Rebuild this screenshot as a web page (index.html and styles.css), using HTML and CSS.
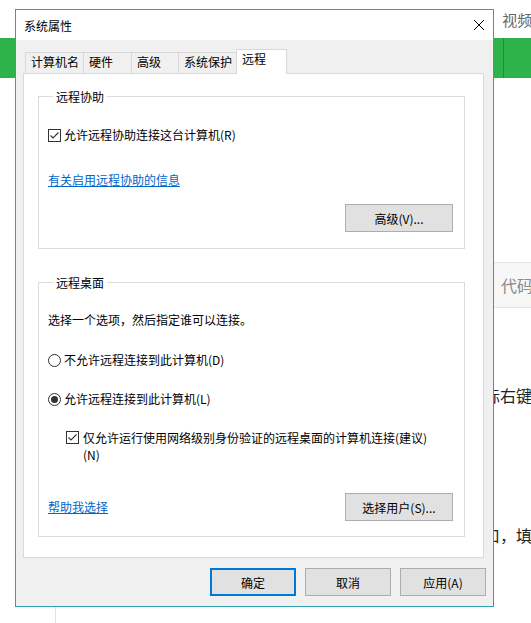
FILE: index.html
```html
<!DOCTYPE html>
<html lang="zh-CN">
<head>
    <meta charset="UTF-8">
    <meta name="viewport" content="width=device-width, initial-scale=1.0">
    <title>系统属性</title>
    <link rel="stylesheet" href="styles.css">
</head>
<body>
    <!-- page behind the window -->
    <div class="site">
        <div class="site-top">
            <a>首页</a><a>资讯</a><a>软件</a><a>教程</a><a>下载</a>
            <a>网页</a><a>编程</a><a>数据</a><a>脚本</a><a>视频</a>
        </div>
        <div class="site-nav">
            <span class="nav-item"></span>
            <span class="nav-item"></span>
            <span class="nav-item"></span>
            <span class="nav-item"></span>
            <span class="nav-item"></span>
        </div>
        <div class="site-main">
            <div class="side"></div>
            <div class="article">
                <p>很多时候我们需要从另一台电脑远程操作</p>
                <p>本机，这时就要先在系统里开启远程桌面。</p>
                <p>下面介绍具体的设置方法。</p>
                <p>一、打开系统属性</p>
                <p>可以在运行框中输入下面的命令：</p>
                <p>&nbsp;</p>
                <div class="code-head">
                    <span class="code-name">运行命令</span>
                    <span class="code-tab">代码</span>
                </div>
                <div class="code-body">
                    <div>Win + R</div>
                    <div>sysdm.cpl</div>
                </div>
                <p>打开控制面板后找到系统选项，或者在此电脑图标上单击鼠标右键，选择属性。</p>
                <p>二、切换到远程选项卡</p>
                <p>在远程桌面一栏中选择允许连接，</p>
                <p>再勾选下方的网络级别身份验证。</p>
                <p>三、添加远程用户</p>
                <p>在弹出的系统属性对话框中切换到远程选项卡，打开远程窗口，填写允许连接的用户名称。</p>
            </div>
        </div>
    </div>

    <!-- System Properties window -->
    <div class="dialog">
        <div class="dialog-title">
            <span>系统属性</span>
            <span class="close">
                <svg width="10" height="10" viewBox="0 0 10 10"><path d="M0 0L10 10M10 0L0 10" stroke="#000" stroke-width="1"/></svg>
            </span>
        </div>
        <div class="dialog-body">
            <div class="tabs">
                <div class="tab tab-name">计算机名</div>
                <div class="tab tab-hw">硬件</div>
                <div class="tab tab-adv">高级</div>
                <div class="tab tab-name">系统保护</div>
                <div class="tab tab-remote active">远程</div>
            </div>
            <div class="panel">
                <div class="group">
                    <div class="group-title">远程协助</div>
                    <div class="row first">
                        <svg class="box" width="13" height="13" viewBox="0 0 13 13"><rect x="0.5" y="0.5" width="12" height="12" fill="#fff" stroke="#333"/><path d="M2.5 6.5L5 9L10.5 3.5" fill="none" stroke="#333" stroke-width="1.1"/></svg>
                        <span>允许远程协助连接这台计算机(R)</span>
                    </div>
                    <a class="link link-info">有关启用远程协助的信息</a>
                    <div class="group-foot foot-end">
                        <button class="btn btn-wide">高级(V)...</button>
                    </div>
                </div>

                <div class="group group-desktop">
                    <div class="group-title">远程桌面</div>
                    <div class="desc">选择一个选项，然后指定谁可以连接。</div>
                    <div class="row radio-off">
                        <svg class="box" width="13" height="13" viewBox="0 0 13 13"><circle cx="6.5" cy="6.5" r="6" fill="#fff" stroke="#333"/></svg>
                        <span>不允许远程连接到此计算机(D)</span>
                    </div>
                    <div class="row radio-on">
                        <svg class="box" width="13" height="13" viewBox="0 0 13 13"><circle cx="6.5" cy="6.5" r="6" fill="#fff" stroke="#333"/><circle cx="6.5" cy="6.5" r="3.5" fill="#333"/></svg>
                        <span>允许远程连接到此计算机(L)</span>
                    </div>
                    <div class="row sub">
                        <svg class="box" width="13" height="13" viewBox="0 0 13 13"><rect x="0.5" y="0.5" width="12" height="12" fill="#fff" stroke="#333"/><path d="M2.5 6.5L5 9L10.5 3.5" fill="none" stroke="#333" stroke-width="1.1"/></svg>
                        <span>仅允许运行使用网络级别身份验证的远程桌面的计算机连接(建议)<br>(N)</span>
                    </div>
                    <div class="group-foot foot-split">
                        <a class="link">帮助我选择</a>
                        <button class="btn btn-wide">选择用户(S)...</button>
                    </div>
                </div>
            </div>
            <div class="dialog-footer">
                <button class="btn btn-footer btn-default">确定</button>
                <button class="btn btn-footer">取消</button>
                <button class="btn btn-footer">应用(A)</button>
            </div>
        </div>
    </div>
</body>
</html>
```

FILE: styles.css
```css
html, body {
    margin: 0;
    height: 100%;
    overflow: hidden;
}
body {
    position: relative;
    background: #fff;
    color: #333;
    font-family: "Noto Sans CJK SC", "Microsoft YaHei", sans-serif;
}

/* site behind the window */
.site-top {
    height: 38px;
    display: flex;
    align-items: center;
    gap: 22px;
    padding-left: 34px;
    font-size: 15px;
    color: #666;
    white-space: nowrap;
}
.site-nav {
    height: 40px;
    display: flex;
    padding-left: 4px;
    background: #2db34a;
}
.nav-item {
    width: 99px;
    border-right: 1px solid #1b8f36;
}
.site-main {
    display: flex;
    height: 545px;
}
.side {
    width: 55px;
    flex: none;
    border-right: 1px solid #e2e2e2;
}
.article {
    flex: 1;
    padding: 16px 0 0 12px;
    font-size: 16px;
    color: #222;
    white-space: nowrap;
}
.article p {
    margin: 0;
    line-height: 28px;
}
.code-head {
    display: flex;
    align-items: center;
    height: 44px;
    border-top: 1px solid #e4e4e4;
    border-bottom: 1px solid #e4e4e4;
    background: #f7f7f7;
}
.code-name {
    width: 433px;
    flex: none;
    font-size: 14px;
    color: #888;
}
.code-tab {
    color: #8a8a8a;
}
.code-body {
    padding: 10px 12px 11px;
    font-family: "Liberation Mono", monospace;
    font-size: 14px;
    line-height: 26px;
}

/* the window */
.dialog {
    position: absolute;
    left: 15px;
    top: 9px;
    width: 479px;
    height: 598px;
    box-sizing: border-box;
    display: flex;
    flex-direction: column;
    border: 1px solid #2ba2ad;
    background: #f0f0f0;
    font-size: 12px;
    color: #000;
}
.dialog-title {
    height: 30px;
    display: flex;
    align-items: center;
    justify-content: space-between;
    padding-left: 8px;
    background: #fff;
}
.close {
    width: 28px;
    height: 30px;
    display: flex;
    align-items: center;
    justify-content: center;
}
.dialog-body {
    flex: 1;
    display: flex;
    flex-direction: column;
    padding: 9px 9px 10px 7px;
}

.tabs {
    display: flex;
    align-items: flex-end;
    margin-left: 2px;
}
.tab {
    height: 21px;
    box-sizing: border-box;
    margin-right: -1px;
    padding-left: 5px;
    border: 1px solid #d9d9d9;
    border-bottom: none;
    line-height: 18px;
    background: #f0f0f0;
}
.tab-name { width: 59px; }
.tab-hw { width: 49px; }
.tab-adv { width: 48px; }
.tab-remote { width: 51px; }
.tab.active {
    position: relative;
    z-index: 1;
    height: 25px;
    margin-bottom: -1px;
    background: #fff;
}

.panel {
    height: 485px;
    box-sizing: border-box;
    padding: 0 18px 0 14px;
    border: 1px solid #d9d9d9;
    background: #fff;
}
.group {
    margin-top: 22px;
    padding: 0 11px 16px 9px;
    border: 1px solid #dcdcdc;
}
.group-desktop {
    margin-top: 33px;
    padding-bottom: 15px;
}
.group-title {
    width: fit-content;
    margin: -8px 0 0 5px;
    padding: 0 3px;
    line-height: 16px;
    background: #fff;
}
.row {
    display: flex;
    align-items: center;
    gap: 3px;
    line-height: 16px;
}
.box {
    flex: none;
}
.row.first { margin-top: 22px; }
.desc {
    margin-top: 21px;
    line-height: 16px;
}
.radio-off { margin-top: 24px; }
.radio-on { margin-top: 23px; }
.row.sub {
    align-items: flex-start;
    margin: 22px 0 0 18px;
    gap: 4px;
    line-height: 17px;
}
.row.sub .box {
    margin-top: 2px;
}
.link {
    display: block;
    width: fit-content;
    line-height: 16px;
    color: #0066cc;
    text-decoration: underline;
}
.link-info { margin-top: 29px; }
.group-foot {
    display: flex;
    align-items: center;
}
.foot-end {
    justify-content: flex-end;
    margin-top: 16px;
}
.foot-split {
    justify-content: space-between;
    margin-top: 30px;
}

.btn {
    height: 28px;
    box-sizing: border-box;
    padding: 0;
    border: 1px solid #adadad;
    background: #e1e1e1;
    color: #000;
    font: inherit;
}
.btn-wide { width: 108px; }
.btn-footer { width: 86px; }
.btn-default {
    border: 2px solid #0078d7;
}
.dialog-footer {
    display: flex;
    justify-content: flex-end;
    gap: 9px;
    margin: 10px -2px 0 0;
}
```
